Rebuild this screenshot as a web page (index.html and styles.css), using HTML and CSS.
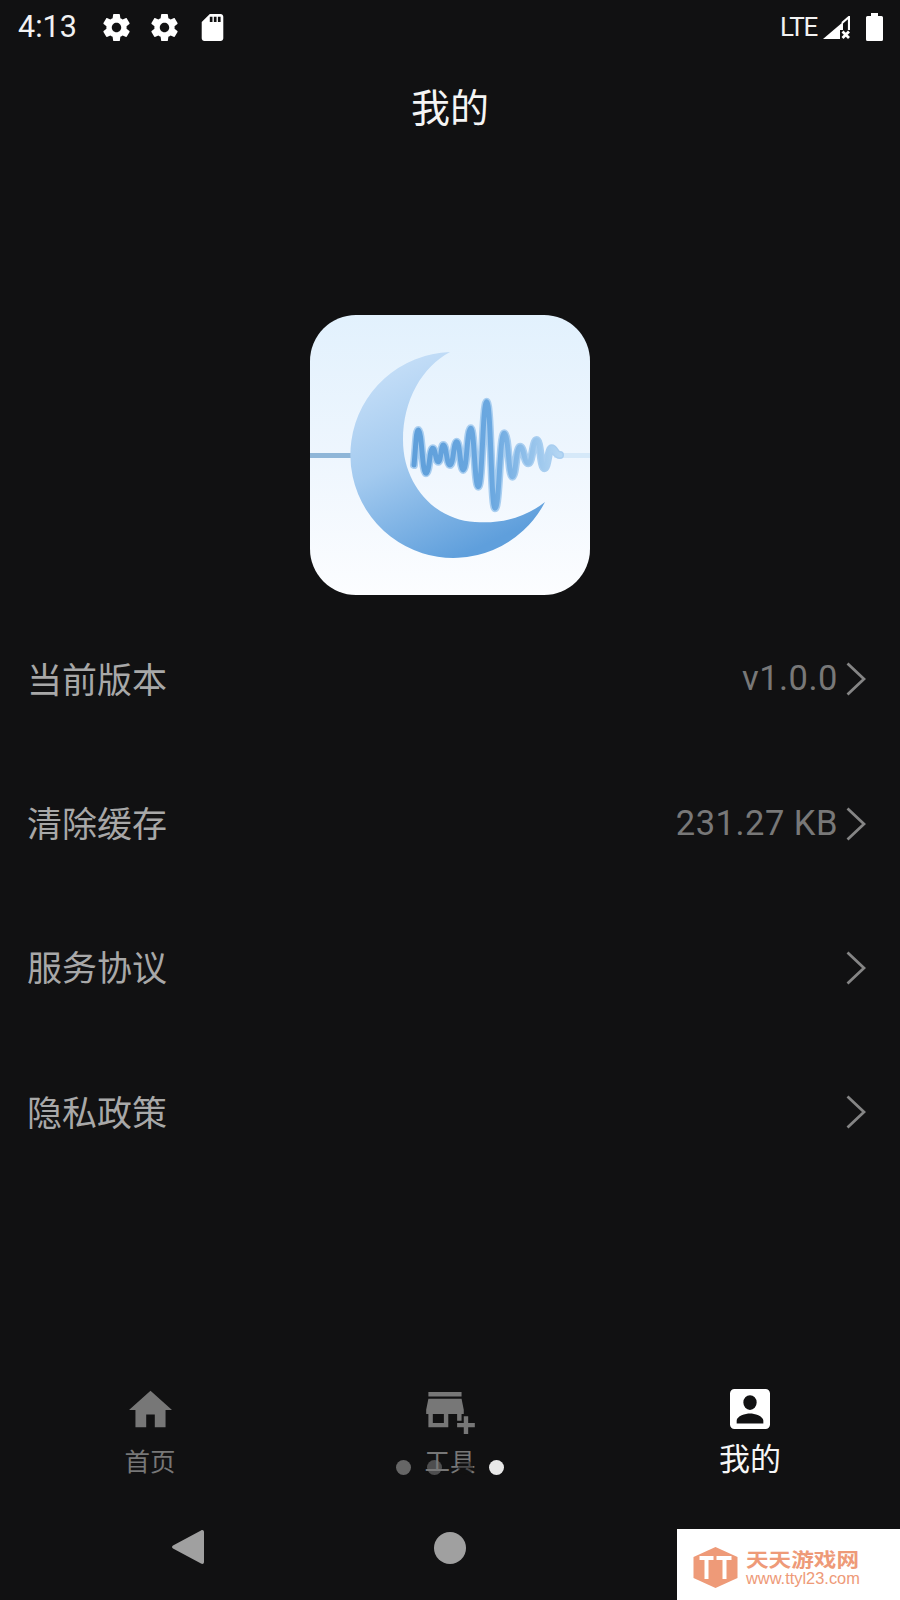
FILE: index.html
```html
<!DOCTYPE html>
<html lang="zh">
<head>
<meta charset="utf-8">
<title>我的</title>
<link rel="stylesheet" href="styles.css">
</head>
<body>
<div class="screen">
  <header class="status">
    <div class="status-left">
      <span class="clock">4:13</span>
      <svg class="gear" viewBox="2 2 20 20"><path d="M19.43 12.98c.04-.32.07-.64.07-.98s-.03-.66-.07-.98l2.11-1.65c.19-.15.24-.42.12-.64l-2-3.46c-.12-.22-.39-.3-.61-.22l-2.49 1c-.52-.4-1.08-.73-1.69-.98l-.38-2.65C14.46 2.18 14.25 2 14 2h-4c-.25 0-.46.18-.49.42l-.38 2.65c-.61.25-1.17.59-1.69.98l-2.49-1c-.23-.09-.49 0-.61.22l-2 3.46c-.13.22-.07.49.12.64l2.11 1.65c-.04.32-.07.65-.07.98s.03.66.07.98l-2.11 1.65c-.19.15-.24.42-.12.64l2 3.46c.12.22.39.3.61.22l2.49-1c.52.4 1.08.73 1.69.98l.38 2.65c.03.24.24.42.49.42h4c.25 0 .46-.18.49-.42l.38-2.65c.61-.25 1.17-.59 1.69-.98l2.49 1c.23.09.49 0 .61-.22l2-3.46c.12-.22.07-.49-.12-.64l-2.11-1.65zM12 15.5c-1.93 0-3.5-1.57-3.5-3.5s1.57-3.5 3.5-3.5 3.5 1.57 3.5 3.5-1.57 3.5-3.5 3.5z"/></svg>
      <svg class="gear" viewBox="2 2 20 20"><path d="M19.43 12.98c.04-.32.07-.64.07-.98s-.03-.66-.07-.98l2.11-1.65c.19-.15.24-.42.12-.64l-2-3.46c-.12-.22-.39-.3-.61-.22l-2.49 1c-.52-.4-1.08-.73-1.69-.98l-.38-2.65C14.46 2.18 14.25 2 14 2h-4c-.25 0-.46.18-.49.42l-.38 2.65c-.61.25-1.17.59-1.69.98l-2.49-1c-.23-.09-.49 0-.61.22l-2 3.46c-.13.22-.07.49.12.64l2.11 1.65c-.04.32-.07.65-.07.98s.03.66.07.98l-2.11 1.65c-.19.15-.24.42-.12.64l2 3.46c.12.22.39.3.61.22l2.49-1c.52.4 1.08.73 1.69.98l.38 2.65c.03.24.24.42.49.42h4c.25 0 .46-.18.49-.42l.38-2.65c.61-.25 1.17-.59 1.69-.98l2.49 1c.23.09.49 0 .61-.22l2-3.46c.12-.22.07-.49-.12-.64l-2.11-1.65zM12 15.5c-1.93 0-3.5-1.57-3.5-3.5s1.57-3.5 3.5-3.5 3.5 1.57 3.5 3.5-1.57 3.5-3.5 3.5z"/></svg>
      <svg class="sd" viewBox="4 2 16 20"><path d="M18 2h-8L4.02 8 4 20c0 1.1.9 2 2 2h12c1.1 0 2-.9 2-2V4c0-1.1-.9-2-2-2zm-6 6h-2V4h2v4zm3 0h-2V4h2v4zm3 0h-2V4h2v4z"/></svg>
    </div>
    <div class="status-right">
      <span class="lte">LTE</span>
      <svg class="signal" viewBox="0 0 27 23"><path d="M0 23 20 6V23z"/><path class="signal-line" d="M19 7 26 1V14"/><path class="signal-gap" d="M17 14h10v9H17z"/><path class="signal-x" d="M19.500 15.500l6.500 6.500M26 15.500l-6.500 6.500"/></svg>
      <svg class="battery" viewBox="0 0 17 28"><path d="M5 0h7v3h3.500a1.500 1.500 0 0 1 1.500 1.500v22a1.500 1.500 0 0 1-1.500 1.500h-14a1.500 1.500 0 0 1-1.500-1.500v-22a1.500 1.500 0 0 1 1.500-1.500h3.500z"/></svg>
    </div>
  </header>

  <h1 class="title">我的</h1>

  <div class="logo-wrap">
    <svg class="logo" viewBox="0 0 280 280">
      <defs>
        <linearGradient id="bg" x1="0" y1="0" x2="0" y2="1">
          <stop offset="0" stop-color="#e2f1fd"/>
          <stop offset="0.5" stop-color="#eef6fe"/>
          <stop offset="1" stop-color="#fcfdff"/>
        </linearGradient>
        <linearGradient id="moon" x1="0.1" y1="0" x2="0.55" y2="1">
          <stop offset="0" stop-color="#cbe2f9"/>
          <stop offset="0.5" stop-color="#a3caef"/>
          <stop offset="1" stop-color="#5f9fdc"/>
        </linearGradient>
        <linearGradient id="wave" gradientUnits="userSpaceOnUse" x1="100" y1="0" x2="250" y2="0">
          <stop offset="0" stop-color="#5f9fda"/>
          <stop offset="0.55" stop-color="#6ba8e0"/>
          <stop offset="1" stop-color="#b4d6f3"/>
        </linearGradient>
        <path id="wave-line" fill="none" stroke-linecap="round" d="M104 150C106 130 106 115 108.300 115C112 115 112 158.300 116 158.300C119.500 158.300 119.500 133.300 122.700 133.300C125.500 133.300 125.500 146.700 128.300 146.700C131 146.700 131 130 133.300 130C136.500 130 136.500 150 140 150C143.500 150 143.500 126.700 146.700 126.700C150 126.700 150 155 153.300 155C157 155 157 113.300 160.700 113.300C164.500 113.300 164.500 171.700 168.300 171.700C172.500 171.700 172.500 86.700 176.700 86.700C181 86.700 181 193.300 185 193.300C189.500 193.300 189.500 118.300 194.300 118.300C198.500 118.300 198.500 161.700 202.300 161.700C206 161.700 206 131.700 210 131.700C214 131.700 214 148.300 218.300 148.300C222.500 148.300 222.500 125 226.700 125C230.500 125 230.500 153.300 234.300 153.300C238 153.300 238 133.300 241.700 133.300C245 133.300 245 140 250 140"/>
      </defs>
      <rect width="280" height="280" rx="46" fill="url(#bg)"/>
      <rect x="0" y="138" width="46" height="5" fill="#8fb6d8"/>
      <rect x="244" y="138" width="36" height="5" fill="#d6e9f9"/>
      <use href="#wave-line" stroke="#a9cef0" stroke-width="8"/>
      <use href="#wave-line" stroke="url(#wave)" stroke-width="5"/>
      <path d="M140 37A103 103 0 1 0 235 187C215 203 190 209 165 207C125 205 93 170 93 125C93 85 112 52 140 37Z" fill="url(#moon)"/>
    </svg>
  </div>

  <ul class="menu">
    <li class="row"><span class="row-label">当前版本</span><span class="row-value">v1.0.0</span><svg class="chev" viewBox="0 0 20 34"><path d="M1.500 1.500 18 17 1.500 32.500"/></svg></li>
    <li class="row"><span class="row-label">清除缓存</span><span class="row-value">231.27 KB</span><svg class="chev" viewBox="0 0 20 34"><path d="M1.500 1.500 18 17 1.500 32.500"/></svg></li>
    <li class="row"><span class="row-label">服务协议</span><svg class="chev" viewBox="0 0 20 34"><path d="M1.500 1.500 18 17 1.500 32.500"/></svg></li>
    <li class="row"><span class="row-label">隐私政策</span><svg class="chev" viewBox="0 0 20 34"><path d="M1.500 1.500 18 17 1.500 32.500"/></svg></li>
  </ul>

  <nav class="tabs">
    <div class="tab">
      <div class="tab-icon"><svg class="ico-home" viewBox="2 3 20 17"><path d="M10 20v-6h4v6h5v-8h3L12 3 2 12h3v8z"/></svg></div>
      <span class="tab-label">首页</span>
    </div>
    <div class="tab">
      <div class="tab-icon"><svg class="ico-shop" viewBox="1 4 22 19"><path d="M15 17h2v-3h1v-2l-1-5H2l-1 5v2h1v6h9v-6h4v3zm-6 1H4v-4h5v4zM2 4h15v2H2z"/><path d="M20 18v-3h-2v3h-3v2h3v3h2v-3h3v-2z"/></svg></div>
      <span class="tab-label">工具</span>
    </div>
    <div class="tab tab-active">
      <div class="tab-icon"><svg class="ico-user" viewBox="3 3 18 18"><path d="M19 3H5a2 2 0 0 0-2 2v14a2 2 0 0 0 2 2h14a2 2 0 0 0 2-2V5a2 2 0 0 0-2-2zm-7 2.800a3 3.300 0 1 1 0 6.600 3 3.300 0 0 1 0-6.600zM18 18.500H6v-1.200c0-2.200 4-3.300 6-3.300s6 1.100 6 3.300z"/></svg></div>
      <span class="tab-label">我的</span>
    </div>
  </nav>

  <div class="dots">
    <i class="dot dot-dim"></i>
    <i class="dot dot-mid"></i>
    <i class="dot dot-dark"></i>
    <i class="dot dot-on"></i>
  </div>

  <footer class="sysnav">
    <svg class="back" viewBox="0 0 32 36"><path d="M29 1.500c1.500-1 3-.2 3 1.500v30c0 1.700-1.500 2.500-3 1.500L1 19.500c-1.300-.8-1.300-2.200 0-3z"/></svg>
    <i class="home-btn"></i>
  </footer>

  <aside class="watermark">
    <svg class="wm-logo" viewBox="0 0 44 41">
      <path class="wm-hex" d="M22 0 44 10v21L22 41 0 31V10z"/>
      <path class="wm-tt" d="M6 9h14v4h-5v19h-4V13H6zM23 9h15v4h-5v19h-4V13h-6z"/>
    </svg>
    <div class="wm-text">
      <span class="wm-name">天天游戏网</span>
      <span class="wm-url">www.ttyl23.com</span>
    </div>
  </aside>
</div>
</body>
</html>
```

FILE: styles.css
```css
* { box-sizing: border-box; }
html, body { margin: 0; padding: 0; background: #111112; }
body { font-family: "Noto Sans CJK SC", Roboto, sans-serif; }

.screen {
  position: relative;
  width: 900px;
  height: 1600px;
  overflow: hidden;
  background: #111112;
  display: flex;
  flex-direction: column;
}

/* status bar */
.status {
  height: 54px;
  display: flex;
  justify-content: space-between;
  align-items: center;
  padding: 0 17px 0 18px;
  flex: none;
}
.status-left, .status-right { display: flex; align-items: center; }
.clock {
  font-family: Roboto, sans-serif;
  font-size: 30.500px;
  line-height: 54px;
  color: #f2f2f2;
  width: 85px;
}
.gear { width: 27px; height: 27px; fill: #fff; margin-right: 21px; }
.gear + .gear { margin-right: 23px; }
.sd { width: 23px; height: 27px; fill: #fff; }
.lte {
  font-family: Roboto, sans-serif;
  font-size: 26px;
  line-height: 50px;
  letter-spacing: -1.300px;
  color: #f2f2f2;
  margin-right: 6px;
}
.signal { width: 27px; height: 23px; fill: #fff; margin-right: 16px; margin-top: 1px; }
.signal-line { fill: none; stroke: #fff; stroke-width: 2.200px; }
.signal-gap { fill: #111112; }
.signal-x { fill: none; stroke: #fff; stroke-width: 2.800px; }
.battery { width: 17px; height: 28px; fill: #fff; }

/* title */
.title {
  margin: 0;
  height: 106px;
  flex: none;
  font-size: 39px;
  font-weight: 400;
  line-height: 102px;
  text-align: center;
  color: #f4f4f4;
}

/* logo */
.logo-wrap {
  flex: none;
  display: flex;
  justify-content: center;
  margin-top: 155px;
}
.logo { width: 280px; height: 280px; display: block; }

/* menu */
.menu { list-style: none; margin: 12px 0 0; padding: 0 34px 0 27px; flex: none; }
.row {
  height: 144.400px;
  display: flex;
  align-items: center;
}
.row-label {
  font-size: 35px;
  color: #a8a8a8;
  line-height: 50px;
  margin: -3px auto 0 0;
}
.row-value {
  font-family: Roboto, sans-serif;
  font-size: 34.500px;
  letter-spacing: 0.500px;
  color: #787878;
  margin: -2px 8px 0 0;
}
.chev { width: 20px; height: 34px; }
.chev path { fill: none; stroke: #858585; stroke-width: 2.800px; }

/* bottom tabs */
.tabs {
  position: absolute;
  left: 0;
  right: 0;
  top: 1389px;
  display: grid;
  grid-template-columns: repeat(3, 1fr);
}
.tab {
  display: flex;
  flex-direction: column;
  align-items: center;
  color: #777;
  fill: #777;
}
.tab-icon { height: 44px; display: flex; align-items: flex-start; }
.ico-home { width: 43px; height: 38px; display: block; margin-top: 1px; }
.ico-shop { width: 49px; height: 42px; display: block; margin-top: 3px; }
.ico-user { width: 40px; height: 40px; display: block; }
.tab-label { font-size: 25.500px; line-height: 36px; margin-top: 9px; }
.tab-active { color: #f6f6f6; fill: #fff; }
.tab-active .tab-label { font-size: 31px; line-height: 42px; margin-top: 3px; }

/* pager dots, over the tabs */
.dots {
  position: absolute;
  left: 396px;
  top: 1460px;
  display: flex;
  gap: 16px;
}
.dot { width: 15px; height: 15px; border-radius: 50%; display: block; }
.dot-dim { background: #666; }
.dot-mid { background: rgba(120, 120, 120, 0.6); }
.dot-dark { background: rgba(17, 17, 18, 0.45); }
.dot-on { background: #e8e8e8; }

/* system nav */
.sysnav {
  position: absolute;
  left: 0;
  top: 1529px;
  height: 36px;
  width: 900px;
  display: flex;
  align-items: center;
  padding-left: 172px;
}
.back { width: 32px; height: 36px; fill: #a0a0a0; margin-right: 230px; }
.home-btn { width: 32px; height: 32px; border-radius: 50%; background: #a0a0a0; display: block; margin-top: 2px; }

/* watermark */
.watermark {
  position: absolute;
  right: 0;
  bottom: 0;
  width: 223px;
  height: 71px;
  background: #fff;
  display: flex;
  align-items: center;
  padding: 6px 0 0 16px;
  gap: 8px;
}
.wm-logo { width: 45px; height: 41px; flex: none; }
.wm-hex { fill: #ee9a78; }
.wm-tt { fill: #fff; }
.wm-text { display: flex; flex-direction: column; gap: 3px; }
.wm-name {
  font-size: 19px;
  font-weight: 700;
  line-height: 18px;
  color: #ee9a78;
  transform: scaleX(1.19);
  transform-origin: left center;
  white-space: nowrap;
}
.wm-url {
  font-family: "Liberation Sans", sans-serif;
  font-size: 16.400px;
  line-height: 15px;
  color: #ee9a78;
}
```
